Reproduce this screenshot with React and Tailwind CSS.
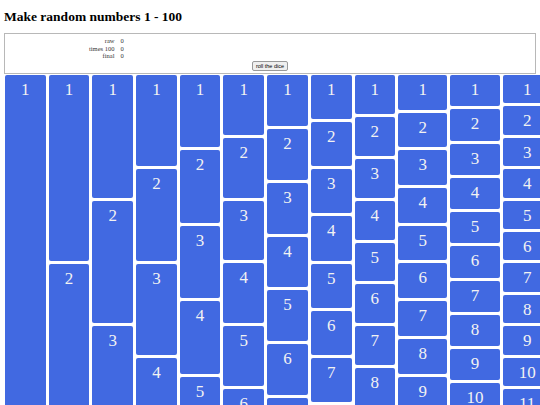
import React from "react";

const H = 377;
const cols = Array.from({ length: 12 }, (_, i) => i + 1);

export default function App() {
  return (
    <div className="h-[405px] w-[540px] overflow-hidden bg-white" style={{ fontFamily: '"Liberation Serif", serif' }}>
      <h3 className="m-0 pl-[4px] pt-[8px] text-[13.5px] font-bold leading-[18px] text-black">Make random numbers 1 - 100</h3>
      <div className="mx-[4px] mt-[7px] flex h-[41px] flex-col border border-[#b8b8b8] pt-[3px]">
        <table className="ml-[84px] w-fit self-start border-collapse text-[6.5px] leading-[7.5px] text-[#333]">
          <tbody>
            <tr><td className="pr-[6px] text-right">raw</td><td>0</td></tr>
            <tr><td className="pr-[6px] text-right">times 100</td><td>0</td></tr>
            <tr><td className="pr-[6px] text-right">final</td><td>0</td></tr>
          </tbody>
        </table>
        <div className="flex justify-center pt-[1px]">
          <button className="h-[10px] rounded-[2px] border border-[#999] bg-[#efefef] px-[3px] text-[5.5px] leading-[8px] text-black" style={{ fontFamily: '"Liberation Sans", sans-serif' }}>roll the dice</button>
        </div>
      </div>
      <div className="mt-[1px] flex gap-[3px] pl-[5px]">
        {cols.map((k) => (
          <div key={k} className="flex shrink-0 flex-col gap-[3px]">
            {Array.from({ length: k }, (_, j) => (
              <div
                key={j}
                className="shrink-0 rounded-[2px] bg-[#4169e1] px-[16.1px] pt-[5px] text-center text-[17px] leading-[20px] text-[#f2f2f2]"
                style={{ height: `${H / k - 3}px` }}
              >
                {j + 1}
              </div>
            ))}
          </div>
        ))}
      </div>
    </div>
  );
}
